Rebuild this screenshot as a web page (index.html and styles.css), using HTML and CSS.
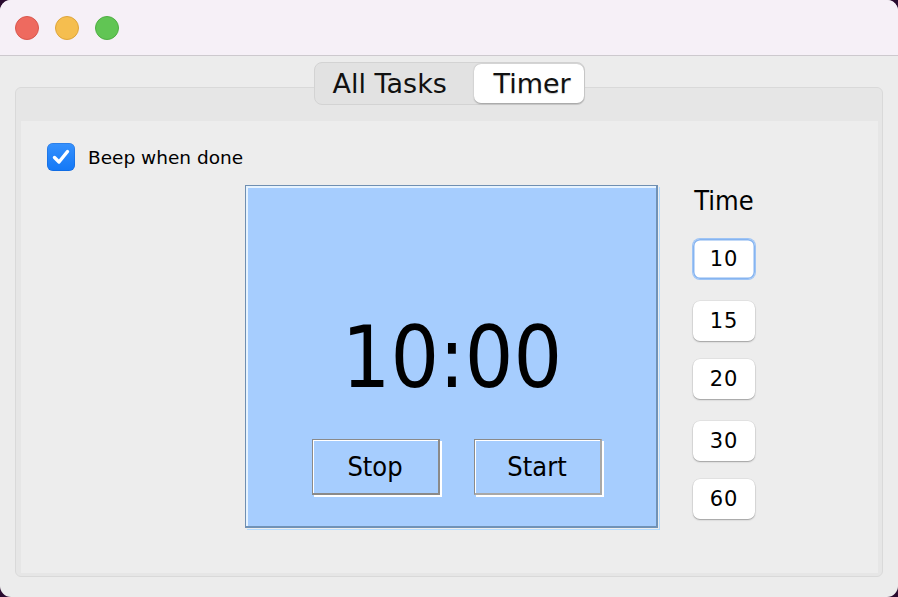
FILE: index.html
```html
<!DOCTYPE html>
<html lang="en">
<head>
<meta charset="utf-8">
<title>Timer</title>
<link rel="stylesheet" href="styles.css">
</head>
<body>
<div class="window">
  <div class="titlebar">
    <span class="light red"></span>
    <span class="light yellow"></span>
    <span class="light green"></span>
  </div>
  <div class="body">
    <div class="tabs">
      <div class="tab">All Tasks</div>
      <div class="tab selected">Timer</div>
    </div>
    <div class="pane">
      <div class="content">
        <label class="check">
          <span class="box">
            <svg viewBox="0 0 28 28" width="28" height="28"><path d="M7.5 14.5 L12 19 L20.5 8.5" fill="none" stroke="#fff" stroke-width="3.4" stroke-linecap="round" stroke-linejoin="round"/></svg>
          </span>
          <span class="check-label">Beep when done</span>
        </label>
        <div class="main">
          <div class="timer">
            <div class="clock">10:00</div>
            <div class="actions">
              <div class="btn">Stop</div>
              <div class="btn start">Start</div>
            </div>
          </div>
          <div class="times">
            <div class="times-label">Time</div>
            <div class="time-list">
              <div class="tb focus">10</div>
              <div class="tb">15</div>
              <div class="tb">20</div>
              <div class="tb">30</div>
              <div class="tb">60</div>
            </div>
          </div>
        </div>
      </div>
    </div>
  </div>
</div>
</body>
</html>
```
FILE: styles.css
```css
html, body {
  margin: 0;
  padding: 0;
  background: #2a0b2f;
}
body {
  width: 898px;
  height: 597px;
  overflow: hidden;
  font-family: "DejaVu Sans Condensed", "DejaVu Sans", sans-serif;
  font-stretch: semi-condensed;
  color: #000;
}
.window {
  width: 898px;
  height: 597px;
  border-radius: 11px;
  overflow: hidden;
  background: #ececec;
  display: flex;
  flex-direction: column;
}
.titlebar {
  height: 55px;
  flex: none;
  background: #f6f0f7;
  border-bottom: 1px solid #cdc9ce;
  display: flex;
  align-items: center;
  gap: 16px;
  padding-left: 15px;
}
.light {
  width: 24px;
  height: 24px;
  border-radius: 50%;
  box-sizing: border-box;
}
.red { background: #ee6a5f; border: 1px solid #d9574d; }
.yellow { background: #f5be4f; border: 1px solid #dea53a; }
.green { background: #61c554; border: 1px solid #4fae43; }

.body {
  flex: 1;
  display: flex;
  flex-direction: column;
  padding: 6px 15px 0;
}
.tabs {
  align-self: center;
  display: flex;
  height: 43px;
  box-sizing: border-box;
  background: #e2e2e2;
  border: 1px solid #d3d3d3;
  border-radius: 8px;
  margin-bottom: -18px;
  position: relative;
  z-index: 1;
  font-family: "DejaVu Sans", sans-serif;
  font-stretch: normal;
  font-size: 27px;
  color: #111;
}
.tab {
  display: flex;
  align-items: center;
  padding: 0 0 0 18px;
  width: 159px;
  box-sizing: border-box;
}
.tab.selected {
  width: 110px;
  padding: 0 0 0 20px;
  background: #fff;
  border-radius: 7px;
  margin: 1px 0 1px 0;
  box-shadow: 0 0.5px 1.5px rgba(0,0,0,0.3);
  text-shadow: 0 1px 1px rgba(0,0,0,0.2);
}
.pane {
  height: 490px;
  box-sizing: border-box;
  border: 1px solid #d9d9d9;
  border-radius: 6px;
  background: #e6e6e6;
  padding: 33px 4px 3px 5px;
  display: flex;
}
.content {
  flex: 1;
  background: #ededed;
  padding: 22px 0 0 26px;
}
.check {
  display: flex;
  align-items: center;
  gap: 13px;
  height: 28px;
}
.box {
  width: 28px;
  height: 28px;
  border-radius: 6px;
  background: linear-gradient(#3691fd, #1378f6);
  box-shadow: inset 0 0 0 0.5px rgba(0,60,160,0.4);
  display: block;
}
.box svg { display: block; }
.check-label {
  font-family: "DejaVu Sans", sans-serif;
  font-stretch: normal;
  font-size: 18.5px;
}
.main {
  display: flex;
  margin-top: 14px;
  margin-left: 198px;
  gap: 35px;
}
.timer {
  width: 413px;
  height: 343px;
  box-sizing: border-box;
  background: #a6cdfe;
  border-top: 1px solid #6f8fb2;
  border-left: 1px solid #6f8fb2;
  border-right: 2px solid #7092b6;
  border-bottom: 2px solid #7092b6;
  box-shadow: inset 2px 2px 0 #e6f3ff, 1px 1px 0 #ededed, 2px 2px 0 #b3dbff;
  display: flex;
  flex-direction: column;
  align-items: center;
}
.clock {
  margin-top: 130px;
  font-size: 85px;
  line-height: 84px;
  height: 84px;
  padding-left: 2px;
}
.actions {
  margin-top: 39px;
  display: flex;
  gap: 34px;
  padding-left: 11px;
}
.btn {
  width: 128px;
  height: 56px;
  box-sizing: border-box;
  border-top: 1px solid #8a8a8a;
  border-left: 1px solid #8a8a8a;
  border-right: 2px solid #8a8a8a;
  border-bottom: 2px solid #8a8a8a;
  box-shadow: inset 1px 1px 0 #fff, 2px 2px 0 #fff;
  display: flex;
  align-items: center;
  justify-content: center;
  font-size: 27px;
}
.btn.start {
  border-right-color: #a8a8a8;
  border-bottom-color: #a8a8a8;
}
.times {
  width: 62px;
  display: flex;
  flex-direction: column;
  align-items: center;
}
.times-label {
  font-size: 27px;
  line-height: 32px;
}
.time-list {
  margin-top: 22px;
  display: flex;
  flex-direction: column;
  gap: 18px;
}
.tb {
  width: 62px;
  height: 40px;
  box-sizing: border-box;
  background: #fff;
  border-radius: 7px;
  box-shadow: 0 1px 1.5px rgba(0,0,0,0.3), 0 0 0 0.5px rgba(0,0,0,0.08);
  display: flex;
  align-items: center;
  justify-content: center;
  font-family: "DejaVu Sans", sans-serif;
  font-stretch: normal;
  font-size: 21px;
  letter-spacing: 1px;
}
.tb:nth-child(even) {
  margin-top: 4px;
}
.tb.focus {
  box-shadow: 0 0 0 1px #9ec4f5, inset 0 0 0 1.5px #86b4f0;
}
```
